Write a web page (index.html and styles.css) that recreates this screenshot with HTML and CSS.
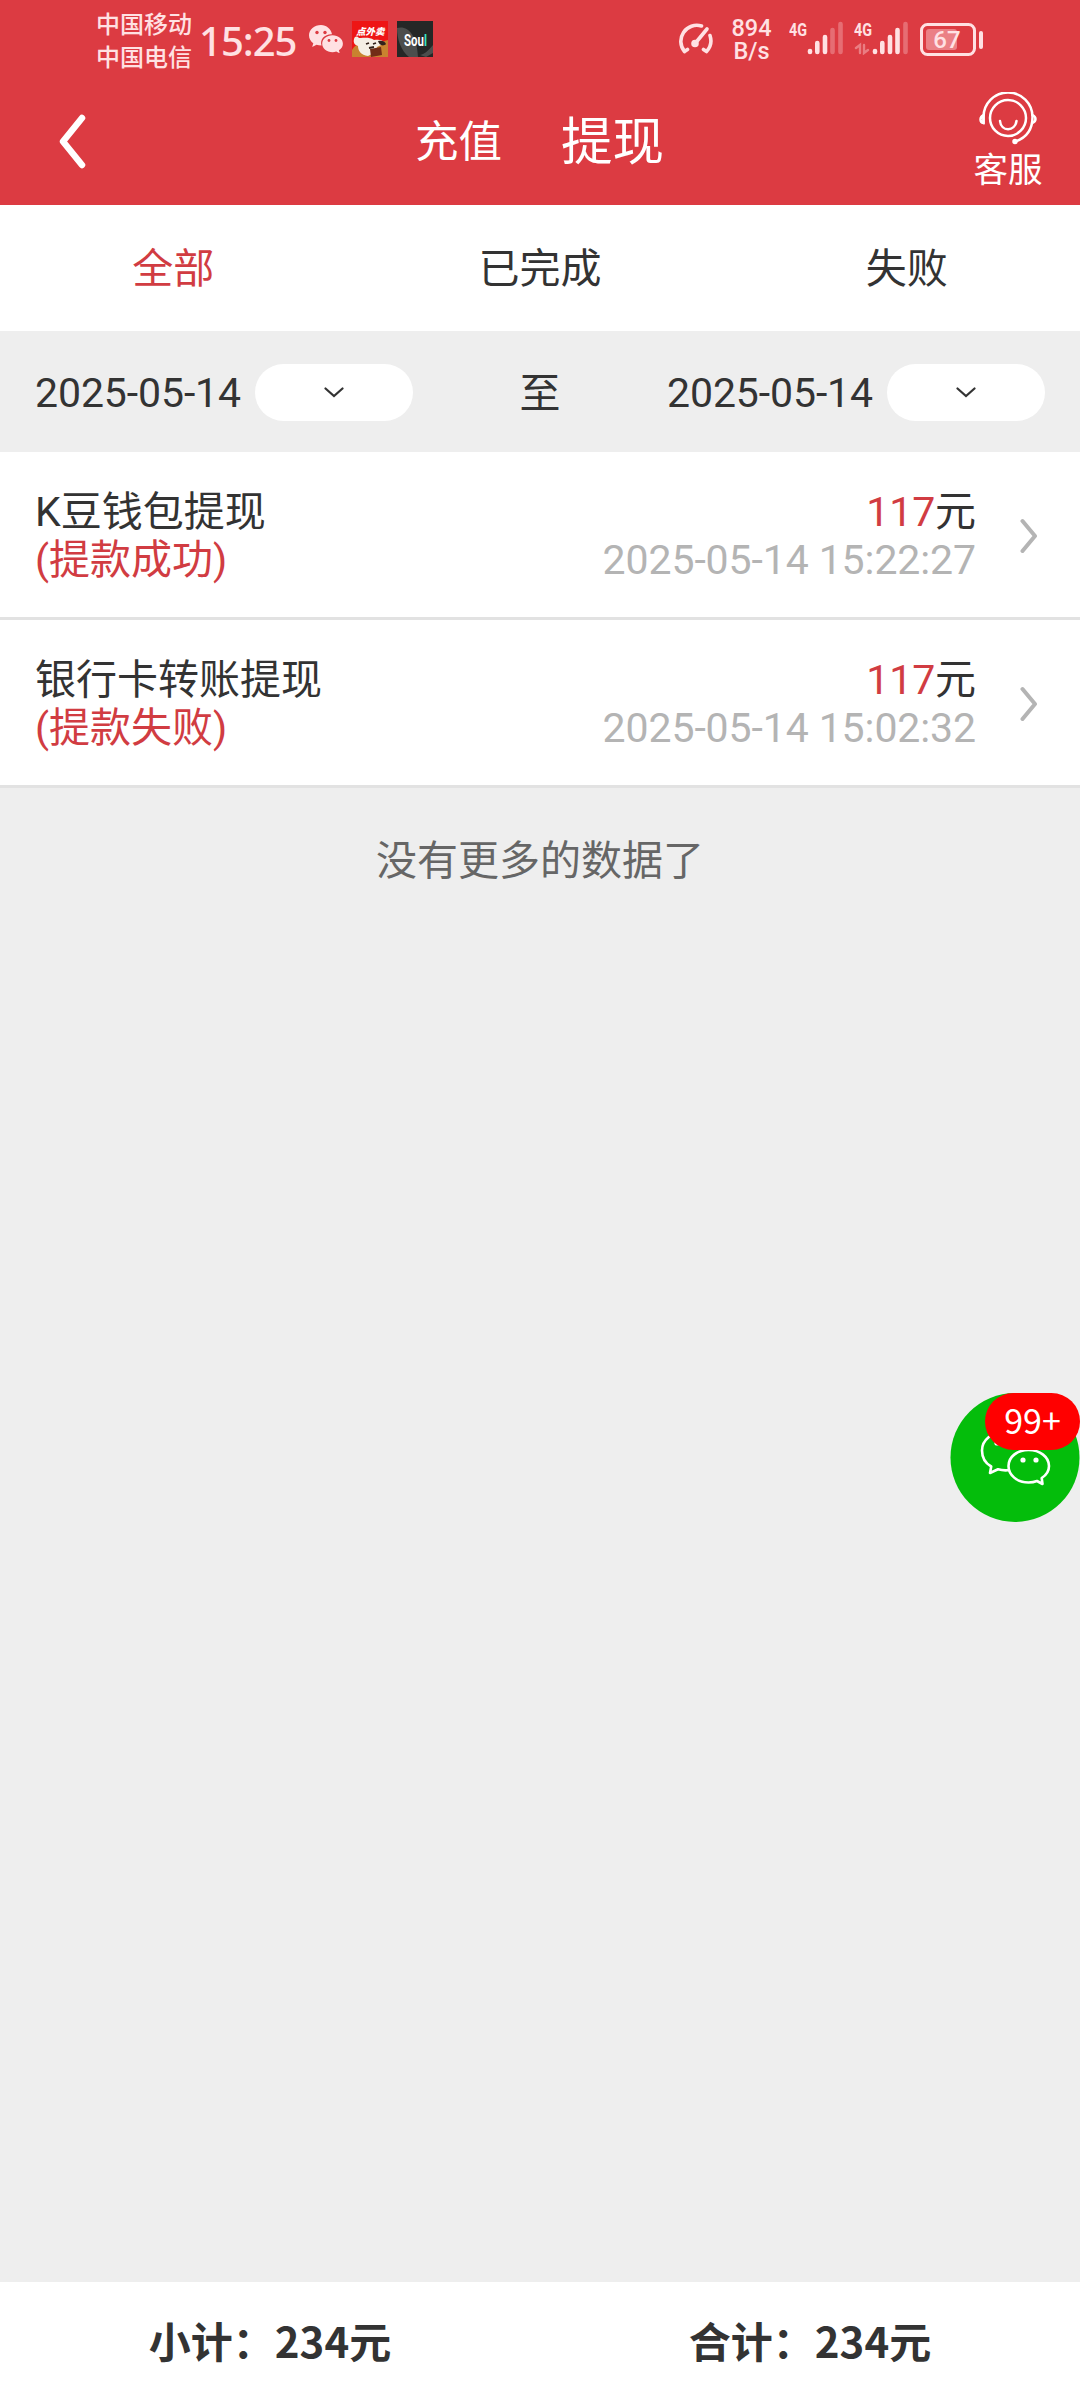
FILE: index.html
```html
<!DOCTYPE html>
<html lang="zh-CN">
<head>
<meta charset="utf-8">
<title>提现记录</title>
<link rel="stylesheet" href="styles.css">
</head>
<body>
<div class="screen">
  <header class="top">
    <div class="status">
      <div class="carriers"><span>中国移动</span><span>中国电信</span></div>
      <div class="clock">15:25</div>
      <svg class="wechat" width="34" height="28" viewBox="0 0 34 28">
        <path fill="#ffe1e3" d="M12 0C5.400 0 0 4.600 0 10.300c0 3.300 1.700 6.100 4.300 8L3.200 22l4.300-2.300c1.600.5 3.200.8 5 .8C10.500 14 16 8.800 23 9.200 22 4 17.500 0 12 0z"/>
        <path fill="#ffe1e3" d="M23.500 10.300c-5.700 0-10.300 3.700-10.300 8.400s4.600 8.500 10.300 8.500c1.300 0 2.600-.2 3.700-.6l3.500 1.700-.8-3.100c2.500-1.500 4-3.900 4-6.500 0-4.700-4.700-8.400-10.400-8.400z"/>
        <g fill="#dc3b42"><circle cx="8" cy="7.500" r="1.700"/><circle cx="16" cy="7.500" r="1.700"/><circle cx="20" cy="15.500" r="1.400"/><circle cx="27" cy="15.500" r="1.400"/></g>
      </svg>
      <svg class="app-food" width="36" height="36" viewBox="0 0 36 36">
        <rect width="36" height="36" fill="#ee1515"/>
        <path d="M0 29c3-5 5-6 10-3l26-7v17H0z" fill="#c9822f"/>
        <path d="M2 18c1-3 3-3 5-1 7 0 10-1 15 2 5-1 9 0 11 3l-8 4-1 5-8 4c-7-1-10-5-10-10-3-1-5-3-4-7z" fill="#f5eee5"/>
        <path d="M26 20c4-1 7 0 8 3-3 3-7 1-8-3z" fill="#33211b"/>
        <path d="M18 28l11-2 1 8-11 2z" fill="#722c16"/>
        <path d="M14 23l3-1m4 1 3-1m-7 5 5-1" stroke="#312019" stroke-width="1.800"/>
        <text x="4" y="14" class="food-label">点外卖</text>
      </svg>
      <svg class="app-soul" width="36" height="36" viewBox="0 0 36 36">
        <rect width="36" height="36" fill="#252726"/>
        <path d="M0 7c10-3 20 6 21 29H12C4 30 0 18 0 7zM23 34c5-1 9-5 13-10v8l-7 4z" fill="#4c4e4d"/>
        <text x="7" y="25" class="soul-label" textLength="23" lengthAdjust="spacingAndGlyphs">Sou<tspan fill="#37e5c6">l</tspan></text>
      </svg>
      <svg class="gauge" width="37" height="34" viewBox="0 0 37 34" fill="none" stroke="#ffe1e3" stroke-width="3.600" stroke-linecap="round">
        <path d="M7.500 29.500A16 16 0 0 1 24.500 4M33 13.500a16 16 0 0 1-3.500 16M7.500 29.500l3-2M29.500 29.500l-3-2"/>
        <path d="M18.500 21 30 7"/><circle cx="18" cy="21.500" r="2" fill="#ffe1e3"/>
      </svg>
      <div class="speed"><span>894</span><span>B/s</span></div>
      <svg class="signal" width="54" height="40" viewBox="0 -6 54 40" stroke="#ffe1e3" stroke-width="4.600" stroke-linecap="round">
        <text x="0" y="15" class="net-label" textLength="18" lengthAdjust="spacingAndGlyphs">4G</text>
        <path d="M21 31v-1M28.300 31v-9M36 31V16"/><path d="M43.500 31V9M51.500 31V3" opacity=".3"/>
      </svg>
      <svg class="signal-two" width="54" height="40" viewBox="0 -6 54 40" stroke="#ffe1e3" stroke-width="4.600" stroke-linecap="round">
        <text x="0" y="15" class="net-label" textLength="18" lengthAdjust="spacingAndGlyphs">4G</text>
        <path d="M21 31v-1M28.300 31v-9M36 31V16M43.500 31V9"/><path d="M51.500 31V3" opacity=".3"/>
        <path d="M2 27l4-3v8M10 24v8l4-3" fill="none" stroke-width="2.400" opacity=".4"/>
      </svg>
      <svg class="battery" width="64" height="34" viewBox="0 0 64 34">
        <rect x="1.500" y="1.500" width="53" height="30" rx="6" fill="none" stroke="#ffe1e3" stroke-width="3"/>
        <rect x="6" y="6" width="31" height="21" rx="3" fill="#ffe1e3" opacity=".42"/>
        <rect x="59" y="8" width="4" height="18" rx="2" fill="#ffe1e3"/>
        <text x="27" y="25" text-anchor="middle" class="battery-label">67</text>
      </svg>
    </div>
    <nav class="title-bar">
      <svg class="back" width="30" height="56" viewBox="0 0 30 56"><path d="M24 4 5 27.500 24 51" fill="none" stroke="#fff" stroke-width="6.500" stroke-linecap="round" stroke-linejoin="round"/></svg>
      <div class="titles"><span class="title-side">充值</span><span class="title-current">提现</span></div>
      <div class="service">
        <svg width="58" height="54" viewBox="0 0 58 54" fill="none" stroke="#fff" stroke-width="2.500" stroke-linecap="round">
          <circle cx="29" cy="26" r="18"/><path d="M4.500 31V25a24.500 24.500 0 0 1 49 0c0 13-7 21-17 24.500M21 29c1 11 15 11 16.500 0"/>
          <path d="M4.500 23c-4 2-4 7 0 8zM53.500 23c4 2 4 6 0 8"/><circle cx="36" cy="49.500" r="1.500" fill="#fff"/>
        </svg>
        <span>客服</span>
      </div>
    </nav>
  </header>
  <div class="tabs"><span class="tab-active">全部</span><span>已完成</span><span>失败</span></div>
  <div class="filter">
    <div class="date"><span>2025-05-14</span><div class="pill"><svg width="20" height="11" viewBox="0 0 20 11"><path d="M1.500 1.500 10 9l8.500-7.500" fill="none" stroke="#333" stroke-width="2.200" stroke-linecap="round"/></svg></div></div>
    <span class="until">至</span>
    <div class="date"><span>2025-05-14</span><div class="pill"><svg width="20" height="11" viewBox="0 0 20 11"><path d="M1.500 1.500 10 9l8.500-7.500" fill="none" stroke="#333" stroke-width="2.200" stroke-linecap="round"/></svg></div></div>
  </div>
  <div class="row">
    <div class="kind"><span>K豆钱包提现</span><span class="red">(提款成功)</span></div>
    <div class="detail"><span><span class="red">117</span>元</span><span class="time">2025-05-14 15:22:27</span></div>
    <svg width="18" height="36" viewBox="0 0 18 36"><path d="M2.500 3 15 18 2.500 33" fill="none" stroke="#b4b4b4" stroke-width="4" stroke-linecap="round" stroke-linejoin="round"/></svg>
  </div>
  <div class="row">
    <div class="kind"><span>银行卡转账提现</span><span class="red">(提款失败)</span></div>
    <div class="detail"><span><span class="red">117</span>元</span><span class="time">2025-05-14 15:02:32</span></div>
    <svg width="18" height="36" viewBox="0 0 18 36"><path d="M2.500 3 15 18 2.500 33" fill="none" stroke="#b4b4b4" stroke-width="4" stroke-linecap="round" stroke-linejoin="round"/></svg>
  </div>
  <div class="no-more">没有更多的数据了</div>
  <footer class="totals"><span>小计：234元</span><span>合计：234元</span></footer>
  <div class="chat">
    <svg width="130" height="130" viewBox="0 0 130 130">
      <circle cx="65" cy="64.500" r="64.500" fill="#04bd0b"/>
      <g fill="none" stroke="#fff" stroke-width="2.600" stroke-linejoin="round">
        <path d="M60 77c-4 .6-8 .4-12-.7L40 80l1.200-6.500C35 70 32 64 32 57.500 32 47 42 39 54.500 39S76 46 78 55"/>
        <path d="M78.500 57C67 57 58.500 64 58.500 73S67 89.500 78.500 89.500c3 0 6-.5 8.500-1.500l5.500 3-.8-6C96.500 82 99 78 99 73c0-9-9-16-20.500-16z"/>
      </g>
      <g fill="#fff"><circle cx="73" cy="67" r="2.600"/><circle cx="86" cy="67" r="2.600"/><circle cx="47" cy="50" r="2.600"/></g>
    </svg>
    <span class="badge">99+</span>
  </div>
</div>
</body>
</html>
```
FILE: styles.css
```css
* { box-sizing: border-box; }
body { margin: 0; background: #eee; }
svg { display: block; flex: none; }
.screen {
  position: relative;
  display: flex;
  flex-direction: column;
  width: 1080px;
  height: 2400px;
  background: #eee;
  color: #333;
  font: 41px/48px Roboto, "Noto Sans CJK SC", sans-serif;
  white-space: nowrap;
}
.top { height: 205px; background: #dc3b42; color: #fff; }
.status { display: flex; height: 80px; padding-left: 96px; color: #ffe1e3; align-items: flex-start; }
.carriers { display: flex; flex-direction: column; width: 103px; padding-top: 7px; font: 500 24px/32.500px "Noto Sans CJK SC", sans-serif; }
.clock { width: 109px; padding-top: 17px; font: 500 40px/48px "Noto Sans", sans-serif; letter-spacing: -1px; }
.wechat { margin: 25px 0 0 1px; }
.app-food { margin: 21px 0 0 9px; }
.app-soul { margin: 21px 0 0 9px; }
.food-label { font: italic 900 9.500px "Noto Sans CJK SC", sans-serif; fill: #fff; }
.soul-label { font: bold 16px Roboto, sans-serif; fill: #fff; }
.gauge { margin: 22px 0 0 244px; }
.speed { display: flex; flex-direction: column; align-items: center; width: 75px; padding-top: 17px; font: 500 23.500px/23px Roboto, sans-serif; }
.net-label { font: bold 19px Roboto, sans-serif; fill: #ffe1e3; stroke: none; }
.signal { margin-top: 15px; }
.signal-two { margin: 15px 0 0 11px; }
.battery { margin: 23px 0 0 12px; }
.battery-label { font: 500 24px Roboto, sans-serif; fill: #ffe1e3; }
.title-bar { display: grid; grid-template-columns: 415px 1fr 144px; height: 125px; }
.back { margin: 34px 0 0 58px; }
.titles { display: flex; align-items: center; gap: 59px; height: 125px; }
.title-side { font-size: 43.500px; }
.title-current { font-size: 51.500px; line-height: 60px; }
.service { display: flex; flex-direction: column; align-items: center; padding-top: 12px; font-size: 34.500px; line-height: 40px; }
.service span { margin-top: 4px; }
.tabs { display: flex; justify-content: space-around; align-items: center; height: 126px; padding-top: 2px; background: #fff; }
.tab-active, .red { color: #d13c42; }
.filter { display: flex; justify-content: space-between; align-items: center; height: 121px; padding: 2px 35px 0; }
.until { padding-top: 2px; }
.date { display: flex; align-items: center; justify-content: space-between; width: 378px; letter-spacing: -.1px; }
.pill { display: flex; align-items: center; justify-content: center; width: 158px; height: 57px; border-radius: 29px; background: #fff; }
.row { display: flex; align-items: center; height: 168px; padding: 2px 42px 0 35px; border-bottom: 3px solid #e2e2e2; background: #fff; }
.kind, .detail { display: flex; flex-direction: column; }
.detail { margin-left: auto; margin-right: 44px; align-items: flex-end; letter-spacing: -.1px; }
.time { color: #b4b4b4; }
.no-more { padding-top: 49px; text-align: center; color: #666; }
.totals { display: flex; margin-top: auto; height: 118px; padding-bottom: 2px; align-items: center; background: #fff; font: 700 42px/60px "Noto Sans CJK SC", sans-serif; }
.totals span { flex: 1; text-align: center; }
.chat { position: absolute; right: 0; top: 1393px; width: 130px; height: 130px; }
.badge { position: absolute; right: 0; top: 0; width: 95px; height: 57px; border-radius: 29px; background: #f00; color: #fff; font: 34px/54px "Noto Sans CJK SC", sans-serif; text-align: center; }
```
